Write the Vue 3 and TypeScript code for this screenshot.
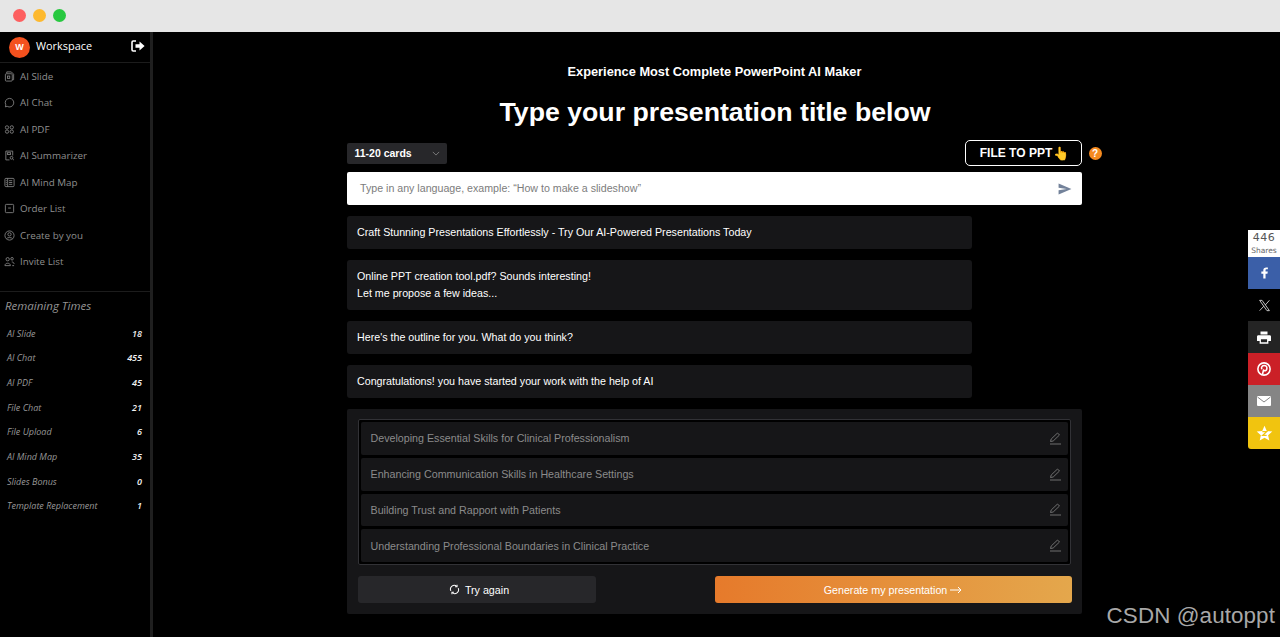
<script setup lang="ts">
const navItems = ['AI Slide', 'AI Chat', 'AI PDF', 'AI Summarizer', 'AI Mind Map', 'Order List', 'Create by you', 'Invite List']
const remaining: [string, number][] = [
  ['AI Slide', 18], ['AI Chat', 455], ['AI PDF', 45], ['File Chat', 21],
  ['File Upload', 6], ['AI Mind Map', 35], ['Slides Bonus', 0], ['Template Replacement', 1],
]
const messages = [
  ['Craft Stunning Presentations Effortlessly - Try Our AI-Powered Presentations Today'],
  ['Online PPT creation tool.pdf? Sounds interesting!', 'Let me propose a few ideas...'],
  ["Here's the outline for you. What do you think?"],
  ['Congratulations! you have started your work with the help of AI'],
]
const outline = [
  'Developing Essential Skills for Clinical Professionalism',
  'Enhancing Communication Skills in Healthcare Settings',
  'Building Trust and Rapport with Patients',
  'Understanding Professional Boundaries in Clinical Practice',
]
</script>

<template>
  <div class="window">
    <header class="chrome">
      <span class="dot red"></span><span class="dot yellow"></span><span class="dot green"></span>
    </header>
    <div class="body">
      <aside class="sidebar">
        <div class="brand">
          <span class="avatar">W</span>
          <span class="brand-name">Workspace</span>
          <svg class="logout" viewBox="0 0 14 12" width="14" height="12">
            <path d="M5 1H2.2C1.5 1 1 1.5 1 2.2v7.6C1 10.5 1.5 11 2.2 11H5" fill="none" stroke="#fff" stroke-width="1.6"/>
            <path d="M4.5 4.3h4V1.6L13.6 6 8.5 10.4V7.7h-4z" fill="#fff"/>
          </svg>
        </div>
        <nav class="nav">
          <div v-for="(item, i) in navItems" :key="item" class="nav-item">
            <svg class="nav-icon" viewBox="0 0 12 12" width="11" height="11" fill="none" stroke="#8a8a8a" stroke-width="0.9">
              <template v-if="i === 0"><path d="M3 2.500V1h5l2.500 2.500V9.500H9"/><rect x="1.500" y="3" width="7.500" height="8" rx="1"/><rect x="3.800" y="5.500" width="2.500" height="2.500"/></template>
              <path v-else-if="i === 1" d="M6 1.500a4.700 4.700 0 1 1-2.500 8.700L1.500 10.800l.5-2.200A4.700 4.700 0 0 1 6 1.500z"/>
              <template v-else-if="i === 2"><rect x="1.500" y="2" width="3.500" height="3.500" rx="1.500"/><circle cx="8.500" cy="3.700" r="1.800"/><circle cx="3.300" cy="8.300" r="1.800"/><circle cx="8.500" cy="8.300" r="1.800"/></template>
              <template v-else-if="i === 3"><path d="M9.500 6V1.200H2v9.600h4"/><rect x="3.700" y="3" width="3.500" height="2"/><circle cx="8.200" cy="8.500" r="1.500"/><path d="M9.300 9.600 10.800 11"/></template>
              <template v-else-if="i === 4"><rect x="1" y="1.500" width="10" height="9" rx="1"/><path d="M4 1.500v9M5.500 4H9M5.500 6H9M5.500 8H9M2 4h1M2 6h1M2 8h1"/></template>
              <template v-else-if="i === 5"><rect x="1.500" y="1.500" width="9" height="9" rx="1"/><path d="M4.500 5.500h3"/></template>
              <template v-else-if="i === 6"><circle cx="6" cy="6" r="5"/><circle cx="6" cy="4.700" r="1.800"/><path d="M2.800 9.500C3.500 7.800 8.500 7.800 9.200 9.500"/></template>
              <template v-else><circle cx="4" cy="3.500" r="1.800"/><circle cx="8.800" cy="3" r="1.400"/><path d="M1 10.500C1 7 7 7 7 10.500zM8.500 6.500c1.500 0 2.500 1 2.500 2.300M9 10.500h2"/></template>
            </svg>
            <span>{{ item }}</span>
          </div>
        </nav>
        <section class="remaining">
          <h3 class="remaining-title">Remaining Times</h3>
          <div v-for="[label, count] in remaining" :key="label" class="remaining-row">
            <span class="remaining-label">{{ label }}</span>
            <span class="remaining-count">{{ count }}</span>
          </div>
        </section>
      </aside>

      <main class="main">
        <div class="column">
          <p class="subtitle">Experience Most Complete PowerPoint AI Maker</p>
          <h1 class="title">Type your presentation title below</h1>

          <div class="toolbar">
            <div class="select">
              <span>11-20 cards</span>
              <svg viewBox="0 0 10 6" width="8" height="5" fill="none" stroke="#8d8d8d" stroke-width="1"><path d="M1 1l4 4 4-4"/></svg>
            </div>
            <button class="file-btn">FILE TO PPT<span class="hand">👆</span></button>
            <span class="help">?</span>
          </div>

          <div class="prompt">
            <span class="placeholder">Type in any language, example: “How to make a slideshow”</span>
            <svg viewBox="0 0 16 14" width="14" height="12"><path d="M0.500 0.500 15.500 7 0.500 13.500 0.500 8.500 10 7 0.500 5.500z" fill="#73829a"/></svg>
          </div>

          <div class="messages">
            <div v-for="(m, i) in messages" :key="i" class="message">
              <div v-for="line in m" :key="line">{{ line }}</div>
            </div>
          </div>

          <section class="panel">
            <div class="outline">
              <div v-for="o in outline" :key="o" class="outline-row">
                <span>{{ o }}</span>
                <svg viewBox="0 0 13 13" width="13" height="13" fill="none" stroke="#6f6f6f" stroke-width="1"><path d="M1.500 9.500 2.200 7 8.500 1 10.500 3 4.200 9z"/><path d="M1 12h11"/></svg>
              </div>
            </div>
            <div class="actions">
              <button class="retry">
                <svg viewBox="0 0 12 12" width="11" height="11" fill="none" stroke="#fff" stroke-width="1.100"><path d="M2 7.500A4.200 4.200 0 0 1 8.500 2.500M10 4.500A4.200 4.200 0 0 1 3.500 9.500"/><path d="M8.800 0.800v2.200H6.600M3.200 11.200V9H5.400"/></svg>
                Try again
              </button>
              <button class="generate">
                Generate my presentation
                <svg viewBox="0 0 12 8" width="12" height="8" fill="none" stroke="#fff" stroke-width="1"><path d="M0 4h11M8 1l3 3-3 3"/></svg>
              </button>
            </div>
          </section>
        </div>
      </main>
    </div>

    <div class="share">
      <div class="share-count"><b>446</b><small>Shares</small></div>
      <div class="share-btn fb"><svg viewBox="0 0 10 16" width="7" height="12"><path d="M6.500 16V9h2.700l.5-3H6.500V4.200C6.500 3.300 6.800 2.800 8 2.800h1.800V.2C9.400.1 8.500 0 7.500 0 5 0 3.300 1.500 3.300 4v2H.5v3h2.800v7z" fill="#fff"/></svg></div>
      <div class="share-btn x"><svg viewBox="0 0 24 24" width="13" height="13" fill="none" stroke="#e8e8e8" stroke-width="1.500"><path d="M3 2.500h4.500L21 21.500h-4.500zM21 2.500 13.500 11M10.500 13.500 3 21.500"/></svg></div>
      <div class="share-btn print"><svg viewBox="0 0 16 14" width="14" height="13"><path d="M4 0h8v3.500H4zM1.500 4.500h13c.8 0 1.500.7 1.500 1.500v5h-3v3H3v-3H0V6c0-.8.700-1.500 1.500-1.500zM4.500 9v3.500h7V9z" fill="#fff"/></svg></div>
      <div class="share-btn pin"><svg viewBox="0 0 16 16" width="14" height="14"><circle cx="8" cy="8" r="7" fill="none" stroke="#fff" stroke-width="1.800"/><path d="M6.300 14l1.300-5.500M5.500 8.300C4.500 6 6 4 8.300 4c2 0 3.200 1.400 3 3.200-.2 2-1.600 3.200-3 2.800-.8-.2-1-.8-1-.8" fill="none" stroke="#fff" stroke-width="1.800"/></svg></div>
      <div class="share-btn mail"><svg viewBox="0 0 14 10" width="14" height="10"><rect width="14" height="10" rx="1" fill="#fff"/><path d="M0.500 1 7 6 13.500 1" fill="none" stroke="#858585" stroke-width="1"/></svg></div>
      <div class="share-btn star"><svg viewBox="0 0 24 24" width="17" height="17"><path d="M12 1l3.200 7.300 7.800.8-5.900 5.200 1.700 7.700L12 18l-6.800 4 1.700-7.700L1 9.100l7.800-.8z" fill="#fff"/><path d="M9 9.500h6L9.500 14.500H15" fill="none" stroke="#f1c40f" stroke-width="1.800"/></svg></div>
    </div>
    <div class="watermark">CSDN @autoppt</div>
  </div>
</template>

<style>
html, body { margin: 0; background: #000; }
</style>

<style scoped>
.window { position: relative; width: 1280px; height: 637px; overflow: hidden; background: #000; display: flex; flex-direction: column; font-family: "Liberation Sans", Arial, sans-serif; }
.chrome { height: 32px; flex: none; background: #e6e6e6; display: flex; align-items: center; gap: 7px; padding: 0 0 2px 13px; box-sizing: border-box; }
.dot { width: 13px; height: 13px; border-radius: 50%; }
.red { background: #fd5f5f; }
.yellow { background: #fdb92e; }
.green { background: #28c840; }
.body { flex: 1; display: flex; min-height: 0; }
.sidebar { width: 150px; flex: none; border-right: 3px solid #1f1f1f; font-family: "Open Sans", sans-serif; display: flex; flex-direction: column; }
.brand { height: 30px; border-bottom: 1px solid #1c1c1c; display: flex; align-items: center; padding: 0 5px 0 9px; box-sizing: content-box; }
.avatar { width: 21px; height: 21px; border-radius: 50%; background: #f4511e; color: #fff; font: bold 9px "Liberation Sans", sans-serif; display: flex; align-items: center; justify-content: center; }
.brand-name { margin: -3px 0 0 6px; font-size: 10.900px; color: #fff; flex: 1; }
.logout { margin-top: -2px; }
.nav { height: 228px; border-bottom: 1px solid #1c1c1c; box-sizing: content-box; }
.nav-item { height: 26.500px; display: flex; align-items: center; gap: 5px; padding-left: 4px; font-size: 9.800px; color: #8f8f8f; }
.nav-icon { flex: none; }
.remaining { padding: 6px 8px 0 7px; }
.remaining-title { margin: 0 0 7px -2px; font-size: 11.500px; line-height: 16px; font-weight: 400; font-style: italic; color: #949494; }
.remaining-row { height: 24.630px; display: flex; justify-content: space-between; align-items: center; font-style: italic; font-size: 9px; }
.remaining-label { color: #989898; }
.remaining-count { color: #f2f2f2; font-weight: 600; }
.main { flex: 1; display: flex; justify-content: center; min-width: 0; }
.column { width: 735px; margin-left: -5px; display: flex; flex-direction: column; }
.subtitle { margin: 32px 0 0; padding-left: 1px; text-align: center; font-size: 12.800px; line-height: 16px; font-weight: 700; color: #fff; }
.title { margin: 16px 0 0; padding-left: 2px; text-align: center; font-size: 26.700px; line-height: 32px; font-weight: 700; color: #fff; }
.toolbar { position: relative; margin-top: 12px; height: 26px; display: flex; align-items: center; justify-content: space-between; }
.select { width: 100px; height: 21px; box-sizing: border-box; background: #27272a; border-radius: 2px; display: flex; align-items: center; justify-content: space-between; padding: 0 7px 0 8px; color: #fff; font-size: 10.500px; font-weight: 700; }
.file-btn { width: 117px; height: 26px; box-sizing: border-box; background: #000; border: 1.500px solid #fff; border-radius: 5px; color: #fff; font: 700 12px "Liberation Sans", sans-serif; padding: 0 0 0 3px; display: flex; align-items: center; justify-content: center; }
.hand { font-size: 13px; margin-left: 1px; }
.help { position: absolute; left: 742px; top: 6.500px; width: 13px; height: 13px; border-radius: 50%; background: #f58a1f; color: #fff; font-size: 10px; font-weight: 700; display: flex; align-items: center; justify-content: center; }
.prompt { margin-top: 6px; height: 33px; background: #fff; border-radius: 2px; display: flex; align-items: center; justify-content: space-between; padding: 0 10px 0 13.500px; }
.placeholder { color: #7c7c7c; font-size: 10.650px; padding-bottom: 1px; }
.messages { margin-top: 11px; display: flex; flex-direction: column; gap: 11px; width: 625px; }
.message { background: #161618; border-radius: 3px; padding: 7.500px 10.500px; font-size: 10.700px; line-height: 17.500px; color: #fff; min-height: 33px; box-sizing: border-box; display: flex; flex-direction: column; justify-content: center; }
.panel { margin-top: 11px; background: #161618; border-radius: 2px; padding: 10px 11px; height: 205px; box-sizing: border-box; }
.outline { height: 146px; box-sizing: border-box; border: 1px solid #323236; border-radius: 2px; background: #000; padding: 2px; display: flex; flex-direction: column; gap: 3px; }
.outline-row { flex: 1; background: #161618; border-radius: 2px; display: flex; align-items: center; justify-content: space-between; padding: 0 6px 0 10px; font-size: 10.700px; color: #8b8b8b; }
.actions { margin-top: 11px; display: flex; justify-content: space-between; margin-right: -1px; }
.retry, .generate { height: 27px; border: 0; border-radius: 3px; color: #fff; font: 10.700px "Liberation Sans", sans-serif; padding: 0; display: flex; align-items: center; justify-content: center; }
.retry { width: 238px; background: #27272a; gap: 5px; padding-left: 5px; box-sizing: border-box; }
.generate { width: 357px; background: linear-gradient(90deg, #e67a2b, #e4a74c); gap: 3px; }
.share { position: absolute; right: 0; top: 230px; width: 32px; display: flex; flex-direction: column; }
.share-count { height: 27px; background: #fff; color: #555; display: flex; flex-direction: column; align-items: center; font-family: "DejaVu Sans", sans-serif; }
.share-count b { font-size: 11px; font-weight: 400; line-height: 15px; letter-spacing: 0.500px; }
.share-count small { font-size: 7.500px; line-height: 9px; color: #666; margin-top: 1px; }
.share-btn { height: 32px; display: flex; align-items: center; justify-content: center; }
.fb { background: #3b5fa8; }
.x { background: #000; }
.print { background: #242424; }
.pin { background: #cb2027; }
.mail { background: #858585; }
.star { background: #f1c40f; border-radius: 0 0 0 3px; }
.watermark { position: absolute; right: 5px; bottom: 9px; color: #a8a8a8; font: 22.400px/24px "Liberation Sans", sans-serif; letter-spacing: 0.100px; }
</style>
